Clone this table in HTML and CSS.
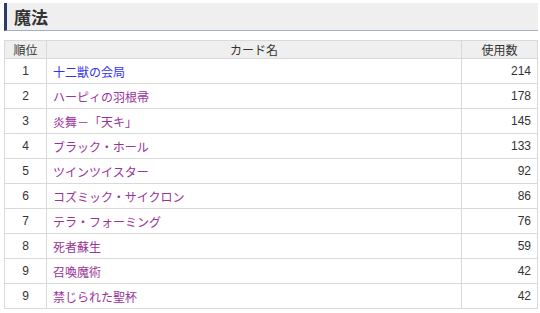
FILE: index.html
```html
<!DOCTYPE html>
<html lang="ja">
<head>
<meta charset="utf-8">
<link rel="stylesheet" href="styles.css">
</head>
<body>
<h2 class="heading">魔法</h2>
<table class="rank">
<thead>
<tr><th class="c-rank">順位</th><th class="c-name">カード名</th><th class="c-count">使用数</th></tr>
</thead>
<tbody>
<tr><td class="c-rank">1</td><td class="c-name"><a class="new" href="#a">十二獣の会局</a></td><td class="c-count">214</td></tr>
<tr><td class="c-rank">2</td><td class="c-name"><a href="#b">ハーピィの羽根帚</a></td><td class="c-count">178</td></tr>
<tr><td class="c-rank">3</td><td class="c-name"><a href="#c">炎舞－「天キ」</a></td><td class="c-count">145</td></tr>
<tr><td class="c-rank">4</td><td class="c-name"><a href="#d">ブラック・ホール</a></td><td class="c-count">133</td></tr>
<tr><td class="c-rank">5</td><td class="c-name"><a href="#e">ツインツイスター</a></td><td class="c-count">92</td></tr>
<tr><td class="c-rank">6</td><td class="c-name"><a href="#f">コズミック・サイクロン</a></td><td class="c-count">86</td></tr>
<tr><td class="c-rank">7</td><td class="c-name"><a href="#g">テラ・フォーミング</a></td><td class="c-count">76</td></tr>
<tr><td class="c-rank">8</td><td class="c-name"><a href="#h">死者蘇生</a></td><td class="c-count">59</td></tr>
<tr><td class="c-rank">9</td><td class="c-name"><a href="#i">召喚魔術</a></td><td class="c-count">42</td></tr>
<tr><td class="c-rank">9</td><td class="c-name"><a href="#j">禁じられた聖杯</a></td><td class="c-count">42</td></tr>
</tbody>
</table>
</body>
</html>
```
FILE: styles.css
```css
html, body {
  margin: 0;
  padding: 0;
  background: #ffffff;
}
body {
  padding: 3px 2px 0 4px;
  font-family: "Liberation Sans", "Noto Sans CJK JP", sans-serif;
  color: #333333;
}
.heading {
  margin: 0 0 9px 0;
  height: 27px;
  line-height: 27px;
  padding-left: 7px;
  background: #efefef;
  border-left: 3px solid #2d3a66;
  border-bottom: 1px solid #a7afc2;
  font-family: "Noto Sans CJK JP", sans-serif;
  font-size: 17px;
  font-weight: bold;
  color: #333333;
}
.rank {
  width: 100%;
  border-collapse: collapse;
  font-size: 12px;
}
.rank th, .rank td {
  border: 1px solid #d9d9d9;
  padding: 0 6px;
}
.rank th {
  height: 17px;
  line-height: 16px;
  background: #efefef;
  font-weight: normal;
  font-family: "Noto Sans CJK JP", sans-serif;
  text-align: center;
  color: #333333;
}
.rank td {
  height: 24px;
}
.c-rank {
  width: 29px;
  text-align: center;
}
.c-count {
  width: 63px;
}
td.c-count {
  text-align: right;
}
.c-name a {
  font-family: "Noto Sans CJK JP", sans-serif;
  text-decoration: none;
  color: #993399;
}
.c-name a.new {
  color: #3333ee;
}
```
